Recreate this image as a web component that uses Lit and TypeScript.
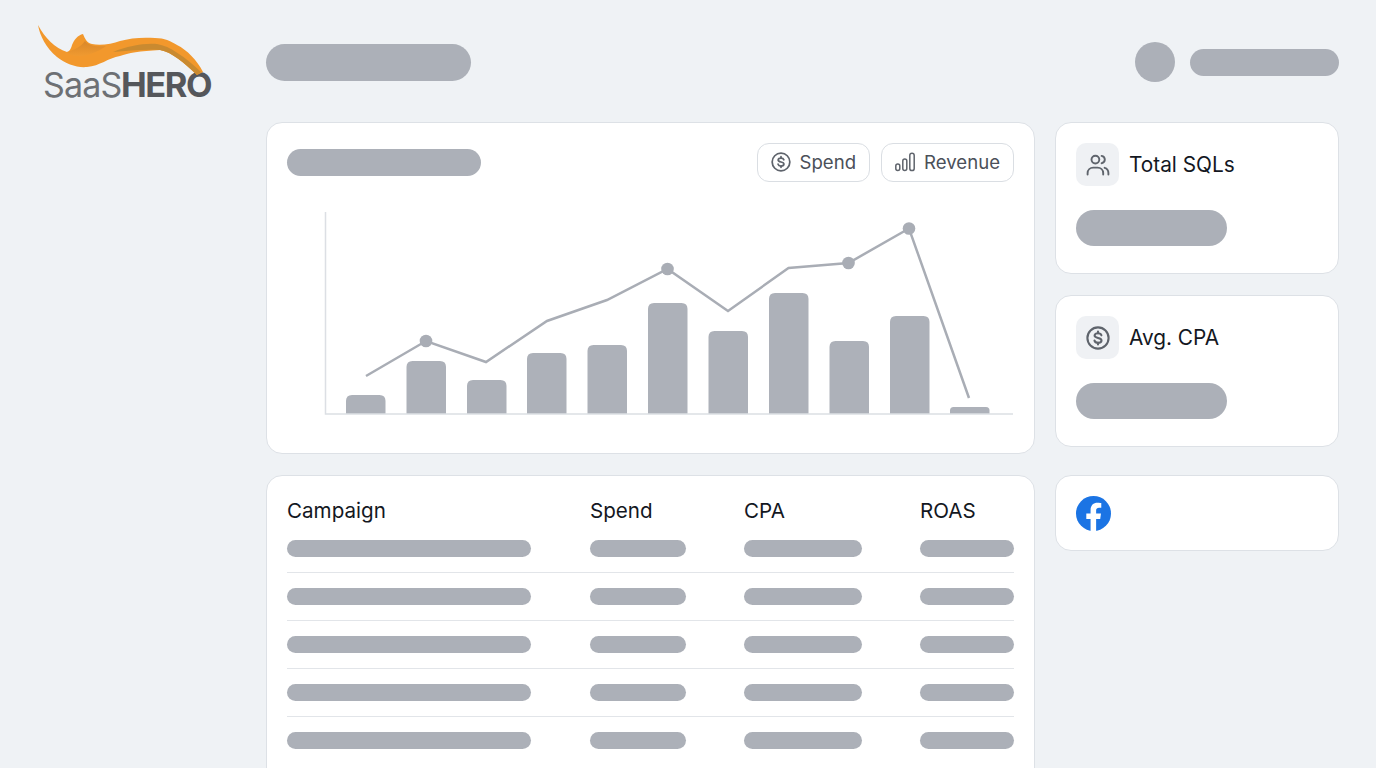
import { LitElement, html, css, svg } from "lit";
import { customElement } from "lit/decorators.js";

const dollarIcon = (size: number) => html`<svg class="ico" width=${size} height=${size} viewBox="0 0 24 24" fill="none" stroke="currentColor" stroke-width="2.1" stroke-linecap="round" stroke-linejoin="round">
  <circle cx="12" cy="12" r="10.6"></circle>
  <path d="M15.400 9.300c-.4-1.300-1.700-2.100-3.400-2.100-1.900 0-3.400 1-3.400 2.400 0 3.300 6.900 1.500 6.900 4.800 0 1.400-1.500 2.400-3.500 2.400-1.800 0-3.100-.8-3.500-2.200"></path>
  <path d="M12 5.600v1.600M12 16.800v1.600"></path>
</svg>`;

const barsIcon = html`<svg class="ico" width="20" height="20" viewBox="0 0 20 20" fill="none" stroke="currentColor" stroke-width="1.5">
  <rect x="0.800" y="12" width="4" height="6.600" rx="2"></rect>
  <rect x="7.800" y="7" width="4" height="11.600" rx="2"></rect>
  <rect x="14.800" y="1.200" width="4.400" height="17.400" rx="2.200"></rect>
</svg>`;

const usersIcon = html`<svg width="24" height="24" viewBox="0 0 24 24" fill="none" stroke="currentColor" stroke-width="1.900" stroke-linecap="round">
  <circle cx="9.400" cy="6.600" r="3.900"></circle>
  <path d="M1.600 21.600v-1.400c0-3.400 2.600-5.600 5.600-5.600h4.400c3 0 5.600 2.200 5.600 5.600v1.400"></path>
  <path d="M15.600 2.900c1.900.4 3.200 1.900 3.200 3.700s-1.300 3.300-3.200 3.700"></path>
  <path d="M18.600 14.800c2.200.6 3.800 2.600 3.800 5.200v1.600"></path>
</svg>`;

const fbIcon = html`<svg width="35" height="35" viewBox="0 0 36 36">
  <circle cx="18" cy="18" r="18" fill="#1b74e4"></circle>
  <path fill="#fff" d="M15 36V23.600h-4.400V18H15v-3.600c0-4.900 2.900-7.500 7.200-7.500 2 0 3.800.3 3.800.3v4.800h-2.300c-2.300 0-3 1.400-3 2.900V18h5l-.8 5.600h-4.200V36z"></path>
</svg>`;

const logo = html`<svg class="logo" width="190" height="90" viewBox="30 15 190 90">
  <defs>
    <linearGradient id="fin" x1="0" y1="0" x2="0" y2="1">
      <stop offset="0" stop-color="#d9872a"></stop>
      <stop offset="1" stop-color="#f09a30"></stop>
    </linearGradient>
  </defs>
  <text class="saas" x="43" y="96.500">SaaS</text><text class="hero" x="121" y="96.500">HERO</text>
  <path fill="#f2982c" d="M38 25C40 36 46 48 57 57C66 64 77 68 87 67C100 66 108 58 120 56C128 53 140 51 160 50C172 52 184 63 197 75L203 72C197 60 187 50 177 45C170 41 165 38 155 38C143 37 130 38 120 41C112 44 100 46 92 44C87 43 85 39 83 34C78 35 74 40 72 45C71 49 69 52 67 52C55 48 45 38 38 25Z"></path>
  <path fill="url(#fin)" d="M67 52C74 50 81 47 85 41C88 45 94 47 106 46C98 52 86 57 77 56C72 56 69 54 67 52Z"></path>
  <path fill="#c98a30" d="M113 52C128 46 143 43 157 44C170 46 185 57 201 72L197 75C184 63 172 52 160 50C144 49 128 51 113 52Z"></path>
</svg>`;

const BARS: [number, number][] = [
  [346, 395], [406.5, 361], [467, 380], [527, 353], [587.5, 345], [648, 303],
  [708.5, 331], [769, 293], [829.5, 341], [890, 316], [950, 407],
];
const LINE: [number, number][] = [
  [366, 376], [426, 341], [486, 362], [547, 321], [607, 300], [667.5, 269],
  [728, 311], [788.5, 268], [848.5, 263], [909, 228.5], [969, 398],
];
const DOTS = [1, 5, 8, 9];

const barPath = (x: number, top: number) => {
  const w = 39.5, base = 414, r = Math.min(6, (base - top) / 2);
  return `M${x} ${base}V${top + r}Q${x} ${top} ${x + r} ${top}H${x + w - r}Q${x + w} ${top} ${x + w} ${top + r}V${base}Z`;
};

const chart = html`<svg class="chart" width="727" height="230" viewBox="287 196 727 230">
  ${BARS.map(([x, t]) => svg`<path d=${barPath(x, t)} fill="#adb1b9"></path>`)}
  <path d="M325.500 212V414H1013" fill="none" stroke="#dcdfe4" stroke-width="1.500"></path>
  <polyline points=${LINE.map((p) => p.join(",")).join(" ")} fill="none" stroke="#a9adb5" stroke-width="2.500"></polyline>
  ${DOTS.map((i) => svg`<circle cx=${LINE[i][0]} cy=${LINE[i][1]} r="6.300" fill="#a9adb5"></circle>`)}
</svg>`;

@customElement("app-root")
export class AppRoot extends LitElement {
  static styles = css`
    :host {
      display: block;
      height: 768px;
      overflow: hidden;
      background: #eff2f5;
      font-family: Inter, "Liberation Sans", sans-serif;
      color: #14181f;
    }
    .page { display: flex; height: 768px; overflow: hidden; }
    .side { width: 266px; flex: none; padding-left: 30px; padding-top: 15px; box-sizing: border-box; }
    .logo { display: block; }
    .saas { font: 400 34px Inter, sans-serif; fill: #6d7074; letter-spacing: -0.800px; }
    .hero { font: 700 34.500px Inter, sans-serif; fill: #55575b; letter-spacing: -1.500px; }
    .main { width: 1073px; flex: none; padding-top: 42px; box-sizing: border-box; }
    .pill { background: #acb0b8; border-radius: 999px; }
    .top { display: flex; align-items: center; height: 40px; margin-bottom: 40px; }
    .top .title { width: 205px; height: 37px; }
    .spacer { flex: 1; }
    .avatar { width: 40px; height: 40px; border-radius: 50%; background: #acb0b8; margin-right: 15px; }
    .top .name { width: 149px; height: 27px; }
    .grid { display: grid; grid-template-columns: 769px 284px; column-gap: 20px; }
    .col { display: flex; flex-direction: column; }
    .card {
      background: #fff;
      border: 1px solid #dde1e6;
      border-radius: 16px;
      box-sizing: border-box;
    }
    .chart-card { height: 332px; padding: 20px; margin-bottom: 21px; }
    .chart-head { display: flex; align-items: center; gap: 11px; height: 39px; margin-bottom: 14px; }
    .chart-head .title { width: 194px; height: 27px; }
    .btn {
      display: flex; align-items: center; gap: 9px; height: 39px;
      border: 1px solid #dadee3; border-radius: 12px;
      padding: 0 13px 1px; box-sizing: border-box;
      font-size: 18.600px; color: #4b5059; background: #fff;
    }
    .ico { color: #5f646c; flex: none; display: block; }
    .chart { display: block; }
    .table-card { height: 400px; padding: 20px; }
    .row { display: grid; grid-template-columns: 303px 154px 176px 94px; }
    .head { height: 29px; align-items: center; font-size: 20.600px; }
    .data { height: 48px; align-items: center; border-bottom: 1px solid #e2e5e9; box-sizing: border-box; padding-bottom: 1px; }
    .data:last-child { border-bottom: none; }
    .data .pill { height: 17px; }
    .w1 { width: 244px; } .w2 { width: 96px; } .w3 { width: 118px; } .w4 { width: 94px; }
    .stat { height: 152px; padding: 20px; }
    .stat + .stat { margin-top: 21px; }
    .stat-head { display: flex; align-items: center; gap: 10px; font-size: 20.800px; height: 43px; margin-bottom: 24px; }
    .tile { width: 43px; height: 43px; border-radius: 10px; background: #eff1f4; display: flex; align-items: center; justify-content: center; color: #5f646c; }
    .stat .pill { width: 151px; height: 36px; }
    .fb { height: 76px; margin-top: 28px; padding: 0 20px; display: flex; align-items: center; }
    .fb svg { display: block; }
  `;

  render() {
    const rows = [0, 1, 2, 3, 4];
    return html`<div class="page">
      <aside class="side">${logo}</aside>
      <main class="main">
        <div class="top">
          <div class="pill title"></div>
          <div class="spacer"></div>
          <div class="avatar"></div>
          <div class="pill name"></div>
        </div>
        <div class="grid">
          <div class="col">
            <section class="card chart-card">
              <div class="chart-head">
                <div class="pill title"></div>
                <div class="spacer"></div>
                <div class="btn">${dollarIcon(20)}<span>Spend</span></div>
                <div class="btn">${barsIcon}<span>Revenue</span></div>
              </div>
              ${chart}
            </section>
            <section class="card table-card">
              <div class="row head"><span>Campaign</span><span>Spend</span><span>CPA</span><span>ROAS</span></div>
              <div>
                ${rows.map(() => html`<div class="row data">
                  <div class="pill w1"></div><div class="pill w2"></div><div class="pill w3"></div><div class="pill w4"></div>
                </div>`)}
              </div>
            </section>
          </div>
          <div class="col">
            <section class="card stat">
              <div class="stat-head"><div class="tile">${usersIcon}</div><span>Total SQLs</span></div>
              <div class="pill"></div>
            </section>
            <section class="card stat">
              <div class="stat-head"><div class="tile">${dollarIcon(24)}</div><span>Avg. CPA</span></div>
              <div class="pill"></div>
            </section>
            <section class="card fb">${fbIcon}</section>
          </div>
        </div>
      </main>
    </div>`;
  }
}
